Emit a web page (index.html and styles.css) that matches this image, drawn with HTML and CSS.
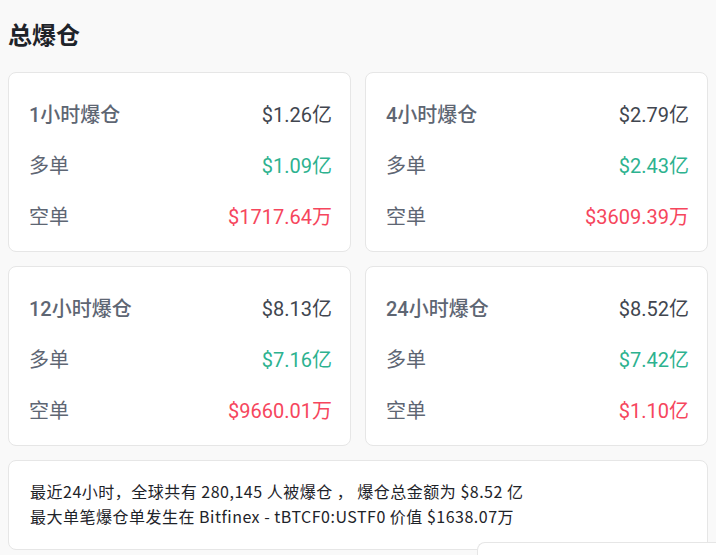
FILE: index.html
```html
<!DOCTYPE html>
<html lang="zh-CN">
<head>
<meta charset="utf-8">
<title>总爆仓</title>
<link rel="stylesheet" href="styles.css">
</head>
<body>
<div class="page">
  <h1 class="title">总爆仓</h1>
  <div class="grid">
    <div class="card">
      <div class="row"><span class="label head">1小时爆仓</span><span class="val">$1.26亿</span></div>
      <div class="row"><span class="label">多单</span><span class="val up">$1.09亿</span></div>
      <div class="row"><span class="label">空单</span><span class="val down">$1717.64万</span></div>
    </div>
    <div class="card">
      <div class="row"><span class="label head">4小时爆仓</span><span class="val">$2.79亿</span></div>
      <div class="row"><span class="label">多单</span><span class="val up">$2.43亿</span></div>
      <div class="row"><span class="label">空单</span><span class="val down">$3609.39万</span></div>
    </div>
    <div class="card">
      <div class="row"><span class="label head">12小时爆仓</span><span class="val">$8.13亿</span></div>
      <div class="row"><span class="label">多单</span><span class="val up">$7.16亿</span></div>
      <div class="row"><span class="label">空单</span><span class="val down">$9660.01万</span></div>
    </div>
    <div class="card">
      <div class="row"><span class="label head">24小时爆仓</span><span class="val">$8.52亿</span></div>
      <div class="row"><span class="label">多单</span><span class="val up">$7.42亿</span></div>
      <div class="row"><span class="label">空单</span><span class="val down">$1.10亿</span></div>
    </div>
  </div>
  <div class="summary">
    <p>最近24小时，全球共有 280,145 人被爆仓 ， 爆仓总金额为 $8.52 亿</p>
    <p>最大单笔爆仓单发生在 Bitfinex - tBTCF0:USTF0 价值 $1638.07万</p>
  </div>
</div>
<div class="floating"></div>
</body>
</html>
```
FILE: styles.css
```css
html, body {
  margin: 0;
  padding: 0;
  background: #f9f9f9;
}
body {
  width: 716px;
  height: 555px;
  overflow: hidden;
  position: relative;
  font-family: Roboto, "Noto Sans CJK SC", sans-serif;
}
.page {
  padding: 18px 8px 0 8px;
}
.title {
  margin: 0 0 22px 0;
  font-size: 24px;
  line-height: 32px;
  font-weight: 700;
  color: #1e2329;
  font-family: "Noto Sans CJK SC", sans-serif;
}
.grid {
  display: grid;
  grid-template-columns: 1fr 1fr;
  gap: 14px;
}
.card {
  background: #fff;
  border: 1px solid #e6e6e6;
  border-radius: 8px;
  padding: 15px 18px 10px 20px;
}
.row {
  display: flex;
  justify-content: space-between;
  align-items: center;
  height: 51px;
  font-size: 20px;
}
.label {
  color: #5e6673;
}
.label.head {
  font-weight: 500;
}
.val {
  color: #41464f;
}
.val.up {
  color: #2db28f;
}
.val.down {
  color: #f6465d;
}
.summary {
  margin-top: 14px;
  background: #fff;
  border: 1px solid #e6e6e6;
  border-radius: 8px;
  padding: 18px 20px 20px 21px;
  font-family: "Noto Sans CJK SC", sans-serif;
  font-size: 16px;
  line-height: 25px;
  letter-spacing: 0.5px;
  color: #1e2329;
}
.summary p {
  margin: 0;
}
.floating {
  position: absolute;
  left: 477px;
  top: 542px;
  width: 238px;
  height: 13px;
  background: #fff;
  border: 1px solid #e6e6e6;
  border-right: none;
  border-bottom: none;
  border-radius: 8px 0 0 0;
}
```
